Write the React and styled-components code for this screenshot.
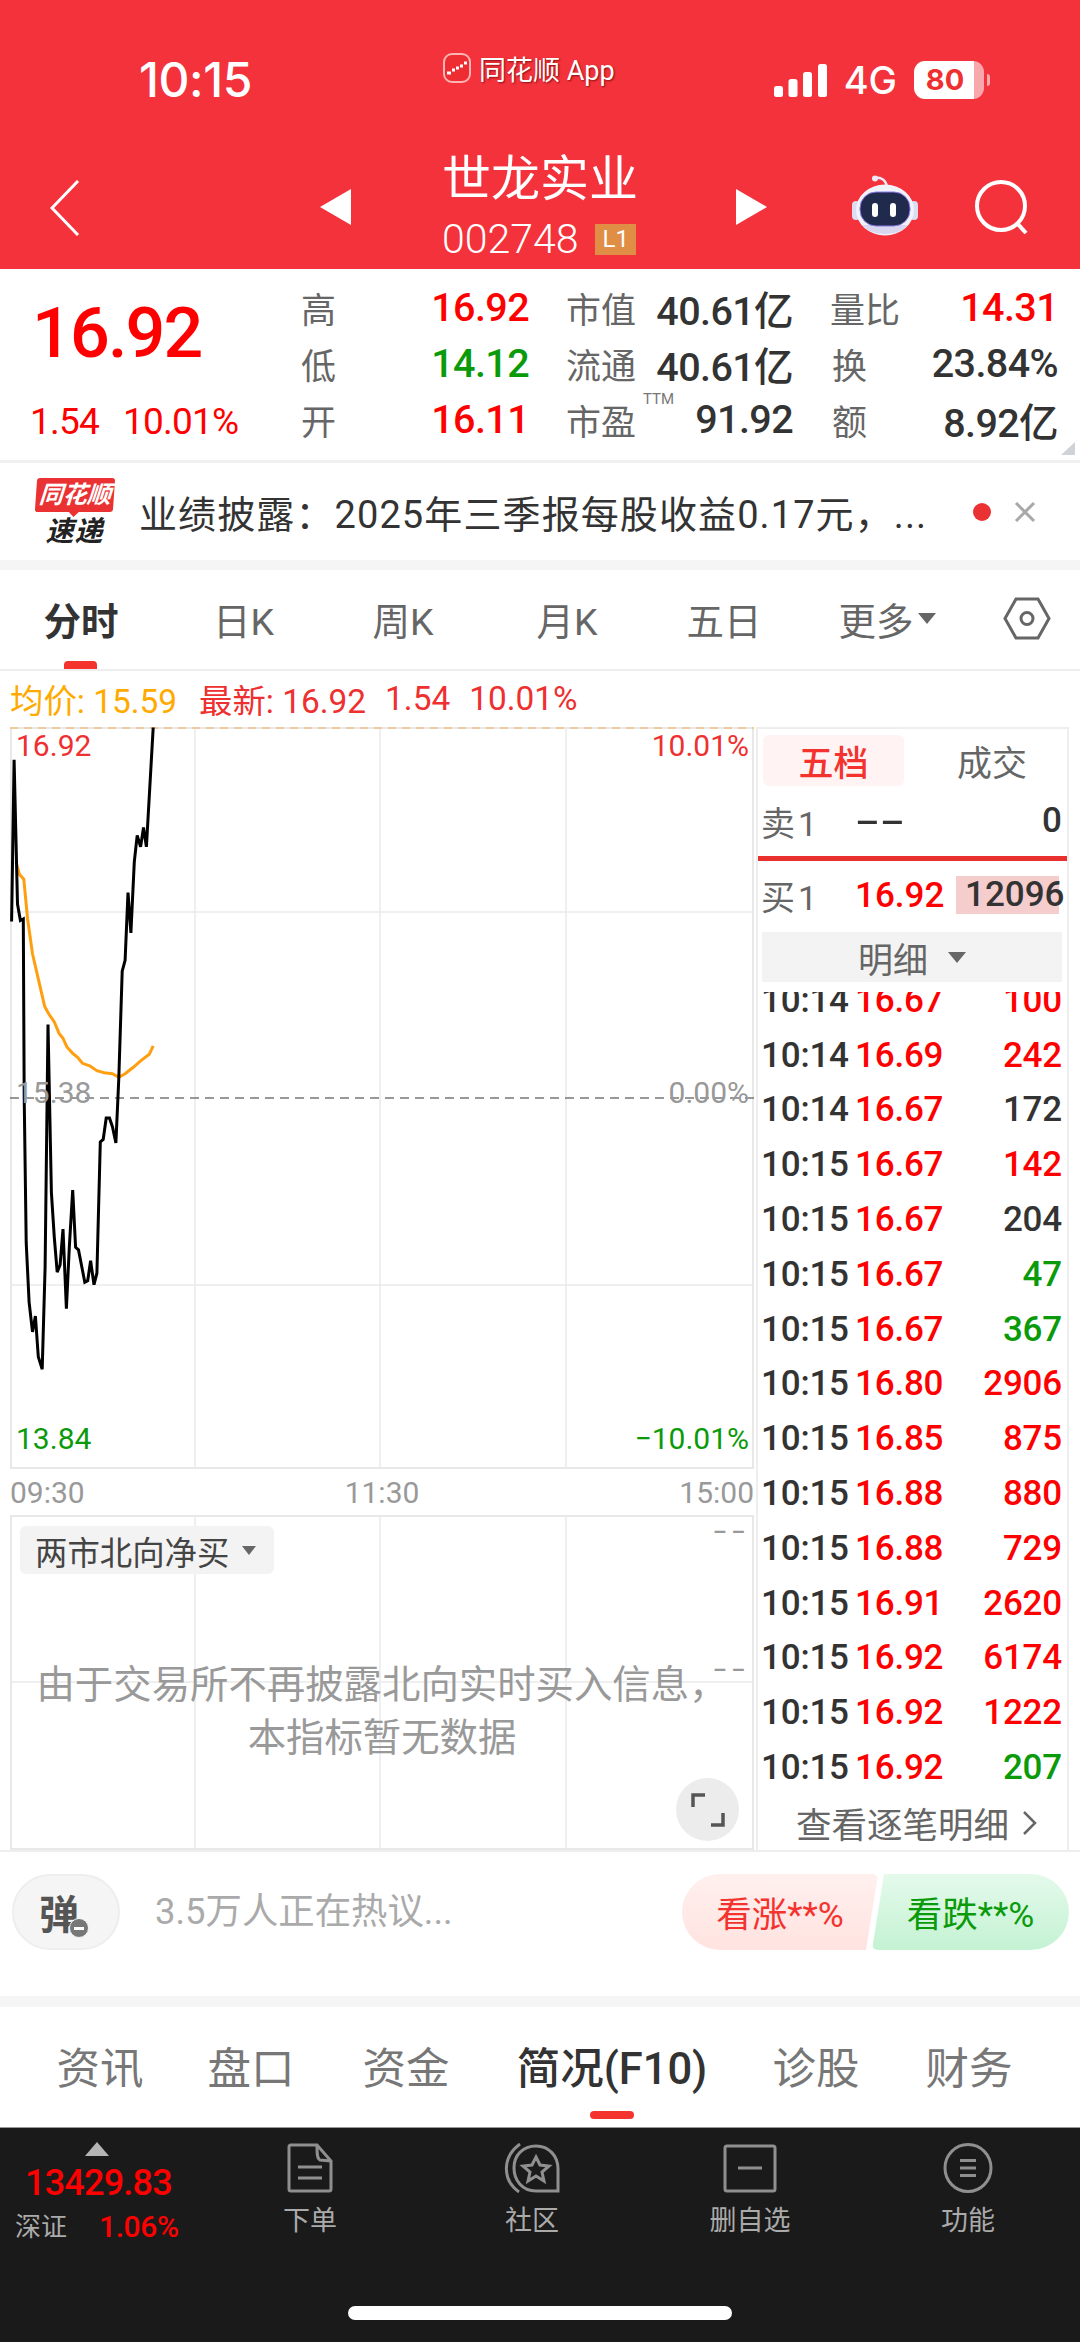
import React from "react";
import styled, { createGlobalStyle } from "styled-components";

const RED = "#f00";
const SOFT_RED = "#ee3030";
const GREEN = "#0a9a0a";
const DARK = "#333";
const CJK = `Roboto, "Noto Sans CJK SC", sans-serif`;

const GlobalStyle = createGlobalStyle`
  html, body { margin: 0; padding: 0; background: #fff; }
  body { width: 1080px; height: 2342px; overflow: hidden; font-family: ${CJK}; }
  * { box-sizing: border-box; }
`;

const Page = styled.div`
  width: 1080px;
  height: 2342px;
  display: flex;
  flex-direction: column;
  background: #fff;
`;

/* header */
const Header = styled.header`
  height: 269px;
  flex: none;
  background: #f4323c;
  color: #fff;
`;
const StatusBar = styled.div`
  height: 134px;
  display: flex;
  align-items: flex-start;
  padding-top: 53px;
`;
const Clock = styled.div`
  width: 300px;
  padding-left: 139px;
  margin-top: 2px;
  font: 500 48px/50px Inter, sans-serif;
  letter-spacing: -0.4px;
`;
const Brand = styled.div`
  margin-left: 143px;
  display: flex;
  align-items: center;
  gap: 8px;
  height: 30px;
  font-size: 27px;
  text-shadow: 1px 1px 2px rgba(90, 0, 0, 0.7);
`;
const StatusRight = styled.div`
  margin-left: auto;
  margin-right: 96px;
  margin-top: 8px;
  display: flex;
  align-items: center;
  gap: 17px;
  font: 500 38px/38px Inter, sans-serif;
`;
const Battery = styled.div`
  width: 70px;
  height: 38px;
  border-radius: 11px;
  background: linear-gradient(90deg, #fff 0 86%, #f8a8ac 86%);
  color: ${SOFT_RED};
  font: 700 29px/38px Inter, sans-serif;
  text-align: center;
  padding-right: 8px;
  position: relative;
  &::after {
    content: "";
    position: absolute;
    right: -6px;
    top: 13px;
    width: 3px;
    height: 12px;
    border-radius: 0 3px 3px 0;
    background: #f8a8ac;
  }
`;
const NavBar = styled.div`
  height: 135px;
  display: grid;
  grid-template-columns: 320px 31px 91px 194px 100px 31px 85px 66px 57px 105px;
  align-items: start;
`;
const TopIcon = styled.svg`
  display: block;
  margin-top: ${(p) => p.$top}px;
`;
const BackSlot = styled.div`
  padding: 46px 0 0 50px;
`;
const TitleBlock = styled.div`
  display: flex;
  flex-direction: column;
  white-space: nowrap;
`;
const StockName = styled.div`
  font-size: 49px;
  line-height: 68px;
  margin-top: 12px;
`;
const CodeRow = styled.div`
  display: flex;
  align-items: center;
  gap: 17px;
  margin-top: 5px;
  font-size: 41px;
  font-weight: 300;
  line-height: 40px;
`;
const LevelTag = styled.span`
  width: 45px;
  height: 31px;
  background: #e08e45;
  font-size: 24px;
  font-weight: 400;
  line-height: 31px;
  text-align: center;
`;

/* quote */
const Quote = styled.section`
  height: 194px;
  flex: none;
  border-bottom: 3px solid #f0f0f0;
  display: flex;
  position: relative;
`;
const PriceBlock = styled.div`
  width: 299px;
  padding-left: 30px;
`;
const BigPrice = styled.div`
  margin: 26px 0 0 2px;
  font-size: 70px;
  line-height: 76px;
  font-weight: 500;
  color: ${RED};
  letter-spacing: -1.8px;
`;
const PriceChange = styled.div`
  margin-top: 31px;
  display: flex;
  gap: 24px;
  color: ${RED};
  font-size: 37px;
  line-height: 40px;
  letter-spacing: -0.8px;
`;
const QuoteGrid = styled.div`
  padding-top: 10px;
  display: grid;
  grid-template-columns: 230px 227px 228px;
  column-gap: 37px;
  grid-auto-rows: 56px;
`;
const QuoteCell = styled.div`
  display: flex;
  align-items: center;
  justify-content: space-between;
  position: relative;
`;
const QuoteLabel = styled.span`
  font-size: 35px;
  color: #666;
  white-space: nowrap;
  padding-left: ${(p) => p.$indent || 0}px;
`;
const QuoteValue = styled.span`
  font-size: 39.5px;
  font-weight: 500;
  white-space: nowrap;
  letter-spacing: -0.6px;
  color: ${(p) => p.$color || DARK};
`;
const Ttm = styled.span`
  position: absolute;
  left: 77px;
  top: 0;
  font-size: 15px;
  line-height: 16px;
  color: #777;
`;
const CornerMark = styled.i`
  position: absolute;
  right: 5px;
  bottom: 5px;
  width: 0;
  height: 0;
  border-left: 14px solid transparent;
  border-bottom: 13px solid #cfd3d8;
`;

/* news */
const NewsBar = styled.section`
  height: 97px;
  flex: none;
  display: flex;
  align-items: center;
  padding-left: 34px;
`;
const NewsLogo = styled.div`
  width: 81px;
  display: flex;
  flex-direction: column;
  align-items: center;
  font-style: italic;
  font-weight: 700;
  line-height: 1;
`;
const NewsTag = styled.span`
  width: 78px;
  height: 34px;
  background: #ea3232;
  color: #fff;
  font-size: 24px;
  line-height: 34px;
  text-align: center;
  border-radius: 3px;
  position: relative;
  white-space: nowrap;
  transform: skewX(-4deg);
  &::after {
    content: "";
    position: absolute;
    left: 33px;
    top: 33px;
    border: 6px solid transparent;
    border-top-color: #ea3232;
  }
`;
const NewsSub = styled.span`
  margin-top: 6px;
  font-size: 28px;
  letter-spacing: 1px;
  color: #222;
`;
const NewsText = styled.div`
  margin-left: 24px;
  width: 824px;
  font-size: 38px;
  color: #333;
  white-space: nowrap;
  letter-spacing: 1.1px;
`;
const NewsDot = styled.span`
  width: 18px;
  height: 18px;
  border-radius: 50%;
  background: #ea3232;
  margin-left: 10px;
`;
const NewsClose = styled.svg`
  margin-left: 23px;
`;
const GrayGap = styled.div`
  height: ${(p) => p.$h}px;
  flex: none;
  background: #f5f5f5;
`;

/* chart tabs */
const ChartTabs = styled.nav`
  height: 101px;
  flex: none;
  border-bottom: 2px solid #eee;
  display: grid;
  grid-template-columns: 162px 163px 156px 172px 142px 184px 96px;
  align-items: center;
`;
const ChartTab = styled.div`
  position: relative;
  height: 100%;
  display: flex;
  align-items: center;
  justify-content: center;
  gap: 4px;
  font-size: 37.5px;
  color: ${(p) => (p.$active ? DARK : "#666")};
  font-weight: ${(p) => (p.$active ? 700 : 400)};
  padding-bottom: 2px;
  ${(p) =>
    p.$active &&
    `&::after {
      content: "";
      position: absolute;
      left: 64px;
      bottom: 0;
      width: 33px;
      height: 8px;
      border-radius: 4px 4px 0 0;
      background: #f4332f;
    }`}
`;
const Caret = styled.i`
  width: 0;
  height: 0;
  border-left: ${(p) => p.$size || 9}px solid transparent;
  border-right: ${(p) => p.$size || 9}px solid transparent;
  border-top: ${(p) => (p.$size || 9) + 2}px solid ${(p) => p.$color || "#666"};
`;
const InfoLine = styled.div`
  height: 56px;
  flex: none;
  display: flex;
  align-items: center;
  padding-left: 10px;
  padding-bottom: 2px;
  font-size: 33.4px;
  white-space: nowrap;
  color: ${SOFT_RED};
`;
const AvgText = styled.span`
  color: #ffaa00;
  margin-right: 22px;
`;
const InfoItem = styled.span`
  margin-right: 19px;
`;

/* main */
const Main = styled.main`
  height: 1125px;
  flex: none;
  display: flex;
  padding-left: 10px;
  border-bottom: 2px solid #eee;
`;
const LeftCol = styled.div`
  width: 746px;
`;
const ChartBox = styled.div`
  position: relative;
  height: 742px;
  width: 744px;
`;
const ChartSvg = styled.svg`
  position: absolute;
  left: 0;
  top: 0;
`;
const ChartLabel = styled.span`
  position: absolute;
  font-size: 30px;
  line-height: 34px;
  color: ${(p) => p.$color};
  ${(p) => (p.$right ? "right: 5px;" : "left: 6px;")}
  top: ${(p) => p.$top}px;
`;
const TimeAxis = styled.div`
  height: 46px;
  display: flex;
  justify-content: space-between;
  align-items: center;
  width: 744px;
  font-size: 30px;
  color: #999;
`;
const SubChart = styled.div`
  position: relative;
  height: 335px;
  width: 744px;
`;
const SubSelect = styled.div`
  position: absolute;
  left: 10px;
  top: 11px;
  width: 254px;
  height: 48px;
  border-radius: 6px;
  background: #f3f3f3;
  display: flex;
  align-items: center;
  padding-left: 15px;
  gap: 13px;
  font-size: 32.4px;
  color: #444;
  white-space: nowrap;
`;
const Dashes = styled.span`
  position: absolute;
  right: 3px;
  top: ${(p) => p.$top}px;
  font-size: 30px;
  line-height: 30px;
  letter-spacing: 4px;
  color: #999;
  transform: scaleX(1.5);
  transform-origin: right center;
`;
const SubMessage = styled.div`
  position: absolute;
  left: 0;
  right: 0;
  top: 143px;
  text-align: center;
  font-size: 38.4px;
  line-height: 53px;
  color: #999;
`;
const ExpandBtn = styled.div`
  position: absolute;
  left: 666px;
  top: 263px;
  width: 63px;
  height: 63px;
  border-radius: 50%;
  background: #ececec;
  display: flex;
  align-items: center;
  justify-content: center;
`;

/* right panel */
const RightCol = styled.aside`
  width: 313px;
  border: 2px solid #eee;
  border-bottom: 0;
  display: flex;
  flex-direction: column;
`;
const PanelTabs = styled.div`
  margin: 6px 0 0 5px;
  display: grid;
  grid-template-columns: 141px 163px;
  height: 51px;
  flex: none;
`;
const PanelTab = styled.div`
  border-radius: 6px;
  display: flex;
  align-items: center;
  justify-content: center;
  font-size: 35px;
  padding-left: ${(p) => (p.$active ? 0 : 13)}px;
  font-weight: ${(p) => (p.$active ? 500 : 400)};
  color: ${(p) => (p.$active ? "#f4332f" : "#666")};
  background: ${(p) => (p.$active ? "#fff4f3" : "transparent")};
`;
const BookRow = styled.div`
  height: ${(p) => p.$h}px;
  flex: none;
  padding: 0 5px ${(p) => p.$pb || 0}px 3px;
  display: grid;
  grid-template-columns: 94px 1fr auto;
  align-items: center;
  font-size: 35px;
  font-weight: 500;
  color: ${DARK};
`;
const BookLabel = styled.span`
  color: #666;
  font-size: 34px;
  font-weight: 400;
  letter-spacing: 3px;
`;
const BookPrice = styled.span`
  color: ${(p) => p.$color || DARK};
`;
const BookDash = styled.span`
  display: inline-block;
  justify-self: start;
  transform: scaleX(2.1);
  transform-origin: left center;
`;
const BookVolume = styled.span`
  padding-left: ${(p) => (p.$bg ? 9 : 0)}px;
  margin-right: ${(p) => (p.$bg ? 3 : 0)}px;
  background: ${(p) => p.$bg || "transparent"};
  line-height: 38px;
  width: ${(p) => (p.$bg ? "103px" : "auto")};
  white-space: nowrap;
`;
const RedRule = styled.div`
  height: 5px;
  background: #e8302f;
  flex: none;
`;
const DetailBar = styled.div`
  flex: none;
  height: 50px;
  margin: 0 5px 0 4px;
  background: #f3f3f3;
  display: flex;
  align-items: center;
  justify-content: center;
  gap: 20px;
  font-size: 35px;
  color: #666;
`;
const TradeList = styled.div`
  margin-top: 10px;
  height: 803px;
  flex: none;
  overflow: hidden;
`;
const TradeRows = styled.div`
  margin-top: -19px;
`;
const TradeRow = styled.div`
  height: 54.8px;
  padding: 0 5px 0 3px;
  display: grid;
  grid-template-columns: 94px 1fr auto;
  align-items: center;
  font-size: 35px;
  font-weight: 500;
  color: ${DARK};
  letter-spacing: -0.2px;
`;
const TradeVol = styled.span`
  color: ${(p) => p.$color};
`;
const MoreLink = styled.div`
  height: 55px;
  display: flex;
  align-items: center;
  justify-content: center;
  gap: 13px;
  font-size: 35.5px;
  color: #666;
  padding-left: 8px;
  white-space: nowrap;
`;

/* comments */
const CommentRow = styled.section`
  height: 144px;
  flex: none;
  padding: 22px 11px 0 12px;
  display: flex;
  align-items: flex-start;
`;
const DanmuBtn = styled.div`
  position: relative;
  width: 108px;
  height: 76px;
  border-radius: 38px;
  background: #f5f5f5;
  border: 2px solid #eee;
  display: flex;
  align-items: center;
  justify-content: center;
  font-size: 40px;
  font-weight: 700;
  color: #555;
  padding-right: 14px;
`;
const DanmuBadge = styled.i`
  position: absolute;
  left: 55px;
  top: 42px;
  width: 20px;
  height: 20px;
  border-radius: 50%;
  background: #777;
  border: 1px solid #f5f5f5;
  display: flex;
  align-items: center;
  justify-content: center;
  &::after {
    content: "";
    width: 10px;
    height: 3px;
    background: #fff;
  }
`;
const CommentHint = styled.div`
  margin: 18px 0 0 35px;
  width: 527px;
  font-size: 36.4px;
  line-height: 40px;
  color: #aaa;
  white-space: nowrap;
`;
const Vote = styled.div`
  width: ${(p) => p.$w}px;
  height: 76px;
  margin-left: ${(p) => p.$ml || 0}px;
  padding-bottom: 2px;
  display: flex;
  align-items: center;
  justify-content: center;
  font-size: 35.5px;
  white-space: nowrap;
  color: ${(p) => p.$color};
  background: ${(p) => p.$bg};
  border-radius: ${(p) => p.$radius};
  clip-path: ${(p) => p.$clip};
`;

/* lower tabs */
const LowerTabs = styled.nav`
  height: 120px;
  flex: none;
  padding: 0 0 4px 24px;
  display: grid;
  grid-template-columns: 152px 150px 160px 252px 156px 150px;
`;
const LowerTab = styled.div`
  position: relative;
  display: flex;
  align-items: center;
  justify-content: center;
  font-size: 43.5px;
  white-space: nowrap;
  color: ${(p) => (p.$active ? DARK : "#777")};
  font-weight: ${(p) => (p.$active ? 500 : 400)};
  ${(p) =>
    p.$active &&
    `&::after {
      content: "";
      position: absolute;
      left: 104px;
      bottom: 4px;
      width: 44px;
      height: 8px;
      border-radius: 4px;
      background: #f4332f;
    }`}
`;

/* bottom nav */
const BottomNav = styled.footer`
  position: relative;
  flex: 1;
  background: #1a1a1a;
  border-top: 1px solid #999;
  display: grid;
  grid-template-columns: 200px 220px 224px 212px 224px;
  align-items: start;
`;
const IndexBlock = styled.div`
  display: flex;
  flex-direction: column;
  align-items: flex-start;
  padding: 14px 0 0 15px;
`;
const IndexArrow = styled.i`
  margin-left: 70px;
  width: 0;
  height: 0;
  border-left: 12px solid transparent;
  border-right: 12px solid transparent;
  border-bottom: 14px solid #b5b5b5;
`;
const IndexValue = styled.div`
  margin: 7px 0 0 10px;
  color: ${RED};
  font-size: 36px;
  line-height: 40px;
  font-weight: 500;
  letter-spacing: -0.8px;
`;
const IndexSub = styled.div`
  margin-top: 4px;
  display: flex;
  align-items: center;
  gap: 32px;
  color: #aaa;
  font-size: 26px;
  line-height: 40px;
`;
const IndexPct = styled.span`
  color: ${RED};
  font-size: 30px;
  font-weight: 500;
  letter-spacing: -0.4px;
`;
const NavItem = styled.div`
  display: flex;
  flex-direction: column;
  align-items: center;
  padding-top: 15px;
  font-size: 27px;
  line-height: 34px;
  color: #aaa;
`;
const NavIcon = styled.svg`
  display: block;
  margin-bottom: 11px;
  fill: none;
  stroke: #8f8f8f;
  stroke-width: 3;
`;
const HomeBar = styled.div`
  position: absolute;
  left: 348px;
  top: 178px;
  width: 384px;
  height: 14px;
  border-radius: 7px;
  background: #fff;
`;

/* chart data, measured from the picture */
const priceLine = [
  [24, 405], [29, 80], [36, 370], [42, 403], [48, 400], [50, 760], [54, 1050], [60, 1170], [67, 1230], [73, 1198],
  [79, 1280], [87, 1305], [93, 1100], [99, 612], [106, 950], [112, 1040], [118, 1110], [124, 1095], [130, 1023],
  [137, 1183], [143, 1060], [150, 945], [156, 1060], [162, 1065], [168, 1095], [175, 1130], [181, 1127], [187, 1087],
  [194, 1135], [200, 1112], [207, 848], [213, 843], [219, 800], [226, 800], [232, 818], [239, 850], [245, 720],
  [252, 505], [258, 483], [264, 347], [270, 428], [277, 285], [283, 232], [290, 255], [296, 216], [302, 255], [316, 15],
];
const avgLine = [
  [33, 285], [40, 310], [49, 320], [57, 400], [67, 470], [80, 525], [92, 575], [100, 590], [112, 607], [122, 630],
  [130, 640], [138, 657], [150, 670], [160, 678], [170, 690], [185, 695], [200, 705], [215, 709], [232, 711],
  [245, 718], [258, 711], [275, 698], [290, 685], [308, 672], [316, 655],
];
const toChart = (pts) =>
  pts.map(([x, y]) => `${(x / 2.063 - 10).toFixed(1)},${(y / 2.01 - 7).toFixed(1)}`).join(" ");

const quoteCells = [
  ["高", "16.92", RED],
  ["市值", "40.61亿"],
  ["量比", "14.31", RED],
  ["低", "14.12", GREEN],
  ["流通", "40.61亿"],
  ["换", "23.84%"],
  ["开", "16.11", RED],
  ["市盈", "91.92"],
  ["额", "8.92亿"],
];

const trades = [
  ["10:14", "16.67", "100", RED],
  ["10:14", "16.69", "242", RED],
  ["10:14", "16.67", "172", DARK],
  ["10:15", "16.67", "142", RED],
  ["10:15", "16.67", "204", DARK],
  ["10:15", "16.67", "47", GREEN],
  ["10:15", "16.67", "367", GREEN],
  ["10:15", "16.80", "2906", RED],
  ["10:15", "16.85", "875", RED],
  ["10:15", "16.88", "880", RED],
  ["10:15", "16.88", "729", RED],
  ["10:15", "16.91", "2620", RED],
  ["10:15", "16.92", "6174", RED],
  ["10:15", "16.92", "1222", RED],
  ["10:15", "16.92", "207", GREEN],
];

const chartTabs = ["分时", "日K", "周K", "月K", "五日"];
const lowerTabs = ["资讯", "盘口", "资金", "简况(F10)", "诊股", "财务"];

const GridLines = ({ h, rows }) => (
  <>
    <rect x="1" y="1" width="742" height={h - 2} fill="none" stroke="#e8e8e8" strokeWidth="2" />
    {[185, 370, 556].map((x) => (
      <line key={x} x1={x} x2={x} y1="0" y2={h} stroke="#eaeaea" strokeWidth="1.5" />
    ))}
    {rows.map((y) => (
      <line key={y} x1="0" x2="744" y1={y} y2={y} stroke="#eaeaea" strokeWidth="1.5" />
    ))}
  </>
);

const App = () => (
  <Page>
    <GlobalStyle />
    <Header>
      <StatusBar>
        <Clock>10:15</Clock>
        <Brand>
          <svg width="28" height="30" viewBox="0 0 28 30">
            <rect x="1" y="1" width="26" height="28" rx="8" fill="#ee2d33" stroke="#ffb4b4" strokeWidth="2" />
            <path d="M4 20h4M9 17h3M13 15h3M17 13h3M21 10h3" fill="none" stroke="#fff" strokeWidth="3" />
          </svg>
          同花顺 App
        </Brand>
        <StatusRight>
          <svg width="53" height="33" viewBox="0 0 53 33" fill="#fff">
            <rect x="0" y="22" width="9" height="11" rx="2.5" />
            <rect x="14.5" y="15" width="9" height="18" rx="2.5" />
            <rect x="29" y="8" width="9" height="25" rx="2.5" />
            <rect x="44" y="0" width="9" height="33" rx="2.5" />
          </svg>
          <span>4G</span>
          <Battery>80</Battery>
        </StatusRight>
      </StatusBar>
      <NavBar>
        <BackSlot>
          <svg width="30" height="56" viewBox="0 0 30 56" fill="none" stroke="#fff" strokeWidth="3">
            <path d="M28 1 2 28l26 27" />
          </svg>
        </BackSlot>
        <TopIcon $top={55} width="31" height="36" viewBox="0 0 31 36" fill="#fff">
          <path d="M31 0v36L0 18z" />
        </TopIcon>
        <span />
        <TitleBlock>
          <StockName>世龙实业</StockName>
          <CodeRow>
            002748
            <LevelTag>L1</LevelTag>
          </CodeRow>
        </TitleBlock>
        <span />
        <TopIcon $top={55} width="31" height="36" viewBox="0 0 31 36" fill="#fff">
          <path d="M0 0v36l31-18z" />
        </TopIcon>
        <span />
        <TopIcon $top={41} width="66" height="62" viewBox="0 0 66 62">
          <path d="M23 3c5-1 10 1 12 8" fill="none" stroke="#eceaf8" strokeWidth="2.5" />
          <circle cx="23" cy="3.5" r="3" fill="#eceaf8" />
          <rect x="0" y="26" width="8" height="19" rx="4" fill="#dcdcf2" />
          <rect x="58" y="26" width="8" height="19" rx="4" fill="#dcdcf2" />
          <ellipse cx="33" cy="35" rx="29" ry="25.5" fill="#f2f2fb" />
          <path d="M10 50c10 12 36 12 46 0" fill="#d9d7f0" />
          <rect x="8" y="17" width="50" height="34" rx="16" fill="#1f2a4c" stroke="#8f7bea" strokeWidth="1" />
          <rect x="20" y="28" width="6" height="14" rx="3" fill="#fff" />
          <rect x="38" y="28" width="6" height="14" rx="3" fill="#fff" />
        </TopIcon>
        <span />
        <TopIcon $top={46} width="57" height="54" viewBox="0 0 57 54" fill="none" stroke="#fff" strokeWidth="4">
          <ellipse cx="26" cy="26" rx="24" ry="24" />
          <path d="M42 43l9 10" />
        </TopIcon>
      </NavBar>
    </Header>

    <Quote>
      <PriceBlock>
        <BigPrice>16.92</BigPrice>
        <PriceChange>
          <span>1.54</span>
          <span>10.01%</span>
        </PriceChange>
      </PriceBlock>
      <QuoteGrid>
        {quoteCells.map(([label, value, color]) => (
          <QuoteCell key={label}>
            <QuoteLabel $indent={label.length === 1 ? 2 : 0}>{label}</QuoteLabel>
            {label === "市盈" && <Ttm>TTM</Ttm>}
            <QuoteValue $color={color}>{value}</QuoteValue>
          </QuoteCell>
        ))}
      </QuoteGrid>
      <CornerMark />
    </Quote>

    <NewsBar>
      <NewsLogo>
        <NewsTag>同花顺</NewsTag>
        <NewsSub>速递</NewsSub>
      </NewsLogo>
      <NewsText>业绩披露：2025年三季报每股收益0.17元，...</NewsText>
      <NewsDot />
      <NewsClose width="22" height="22" viewBox="0 0 22 22" fill="none" stroke="#a8a8a8" strokeWidth="3">
        <path d="M2 2l18 18M20 2 2 20" />
      </NewsClose>
    </NewsBar>
    <GrayGap $h={10} />

    <ChartTabs>
      {chartTabs.map((t, i) => (
        <ChartTab key={t} $active={i === 0}>
          {t}
        </ChartTab>
      ))}
      <ChartTab>
        更多
        <Caret />
      </ChartTab>
      <ChartTab>
        <svg width="48" height="43" viewBox="0 0 48 43" fill="none" stroke="#666" strokeWidth="3">
          <path d="M13 2h22l11 19.5L35 41H13L2 21.5z" />
          <circle cx="24" cy="21.5" r="6" />
        </svg>
      </ChartTab>
    </ChartTabs>
    <InfoLine>
      <AvgText>均价: 15.59</AvgText>
      <InfoItem>最新: 16.92</InfoItem>
      <InfoItem>1.54</InfoItem>
      <InfoItem>10.01%</InfoItem>
    </InfoLine>

    <Main>
      <LeftCol>
        <ChartBox>
          <ChartSvg width="744" height="742">
            <GridLines h={742} rows={[185, 558]} />
            <line x1="0" x2="744" y1="1" y2="1" stroke="#eecb9f" strokeWidth="2" strokeDasharray="8 6" />
            <line x1="0" x2="744" y1="371" y2="371" stroke="#777" strokeWidth="1.5" strokeDasharray="9 6" />
            <polyline points={toChart(avgLine)} fill="none" stroke="#ff9f10" strokeWidth="3" />
            <polyline points={toChart(priceLine)} fill="none" stroke="#000" strokeWidth="3" />
          </ChartSvg>
          <ChartLabel $top={2} $color={SOFT_RED}>16.92</ChartLabel>
          <ChartLabel $top={2} $right $color={SOFT_RED}>10.01%</ChartLabel>
          <ChartLabel $top={349} $color="#999">15.38</ChartLabel>
          <ChartLabel $top={349} $right $color="#999">0.00%</ChartLabel>
          <ChartLabel $top={695} $color={GREEN}>13.84</ChartLabel>
          <ChartLabel $top={695} $right $color={GREEN}>−10.01%</ChartLabel>
        </ChartBox>
        <TimeAxis>
          <span>09:30</span>
          <span>11:30</span>
          <span>15:00</span>
        </TimeAxis>
        <SubChart>
          <ChartSvg width="744" height="335">
            <GridLines h={335} rows={[167]} />
          </ChartSvg>
          <SubSelect>
            两市北向净买
            <Caret $size={7} />
          </SubSelect>
          <Dashes $top={1}>--</Dashes>
          <Dashes $top={139}>--</Dashes>
          <SubMessage>
            由于交易所不再披露北向实时买入信息，
            <br />
            本指标暂无数据
          </SubMessage>
          <ExpandBtn>
            <svg width="34" height="34" viewBox="0 0 34 34" fill="none" stroke="#555" strokeWidth="3.5">
              <path d="M2 14V2h12M32 20v12H20" />
            </svg>
          </ExpandBtn>
        </SubChart>
      </LeftCol>

      <RightCol>
        <PanelTabs>
          <PanelTab $active>五档</PanelTab>
          <PanelTab>成交</PanelTab>
        </PanelTabs>
        <BookRow $h={70}>
          <BookLabel>卖1</BookLabel>
          <BookDash>--</BookDash>
          <BookVolume>0</BookVolume>
        </BookRow>
        <RedRule />
        <BookRow $h={71} $pb={3}>
          <BookLabel>买1</BookLabel>
          <BookPrice $color={RED}>16.92</BookPrice>
          <BookVolume $bg="#f5cdcd">12096</BookVolume>
        </BookRow>
        <DetailBar>
          明细
          <Caret $color="#666" />
        </DetailBar>
        <TradeList>
          <TradeRows>
            {trades.map(([time, price, vol, color], i) => (
              <TradeRow key={i}>
                <span>{time}</span>
                <BookPrice $color={RED}>{price}</BookPrice>
                <TradeVol $color={color}>{vol}</TradeVol>
              </TradeRow>
            ))}
          </TradeRows>
        </TradeList>
        <MoreLink>
          查看逐笔明细
          <svg width="15" height="26" viewBox="0 0 15 26" fill="none" stroke="#666" strokeWidth="2.5">
            <path d="M2 2l11 11L2 24" />
          </svg>
        </MoreLink>
      </RightCol>
    </Main>

    <CommentRow>
      <DanmuBtn>
        弹
        <DanmuBadge />
      </DanmuBtn>
      <CommentHint>3.5万人正在热议...</CommentHint>
      <Vote
        $w={196}
        $color="#f4332f"
        $bg="linear-gradient(180deg, #fff0ee, #ffe3e0)"
        $radius="38px 6px 6px 38px"
        $clip="polygon(0 0, 100% 0, calc(100% - 12px) 100%, 0 100%)"
      >
        看涨**%
      </Vote>
      <Vote
        $w={197}
        $ml={-6}
        $color={GREEN}
        $bg="linear-gradient(180deg, #e4faeb, #c4f2d3)"
        $radius="6px 38px 38px 6px"
        $clip="polygon(12px 0, 100% 0, 100% 100%, 0 100%)"
      >
        看跌**%
      </Vote>
    </CommentRow>
    <GrayGap $h={11} />

    <LowerTabs>
      {lowerTabs.map((t) => (
        <LowerTab key={t} $active={t === "简况(F10)"}>
          {t}
        </LowerTab>
      ))}
    </LowerTabs>

    <BottomNav>
      <IndexBlock>
        <IndexArrow />
        <IndexValue>13429.83</IndexValue>
        <IndexSub>
          深证
          <IndexPct>1.06%</IndexPct>
        </IndexSub>
      </IndexBlock>
      <NavItem>
        <NavIcon width="46" height="50" viewBox="0 0 46 50">
          <path d="M4 2h26l14 16v28a2 2 0 0 1-2 2H4a2 2 0 0 1-2-2V4a2 2 0 0 1 2-2z" />
          <path d="M30 2c0 8 0 14 3 15l11 1M11 24h24M11 35h24" />
        </NavIcon>
        下单
      </NavItem>
      <NavItem>
        <NavIcon width="56" height="50" viewBox="0 0 56 50">
          <path d="M16 1C-2 14-2 37 15 49" />
          <path d="M54 48H32C18 48 10 37 10 25 10 12 19 3 32 3c13 0 22 10 22 23z" />
          <path d="M32 14l4 8 9 1-7 6 2 9-8-5-8 5 2-9-7-6 9-1z" />
        </NavIcon>
        社区
      </NavItem>
      <NavItem>
        <NavIcon width="54" height="50" viewBox="0 0 54 50">
          <rect x="2" y="3" width="50" height="45" rx="2" />
          <path d="M15 25h24" />
        </NavIcon>
        删自选
      </NavItem>
      <NavItem>
        <NavIcon width="50" height="50" viewBox="0 0 50 50">
          <ellipse cx="25" cy="25" rx="23" ry="23.5" />
          <path d="M17 17.5h16M17 25h16M17 32.5h16" />
        </NavIcon>
        功能
      </NavItem>
      <HomeBar />
    </BottomNav>
  </Page>
);

export default App;
